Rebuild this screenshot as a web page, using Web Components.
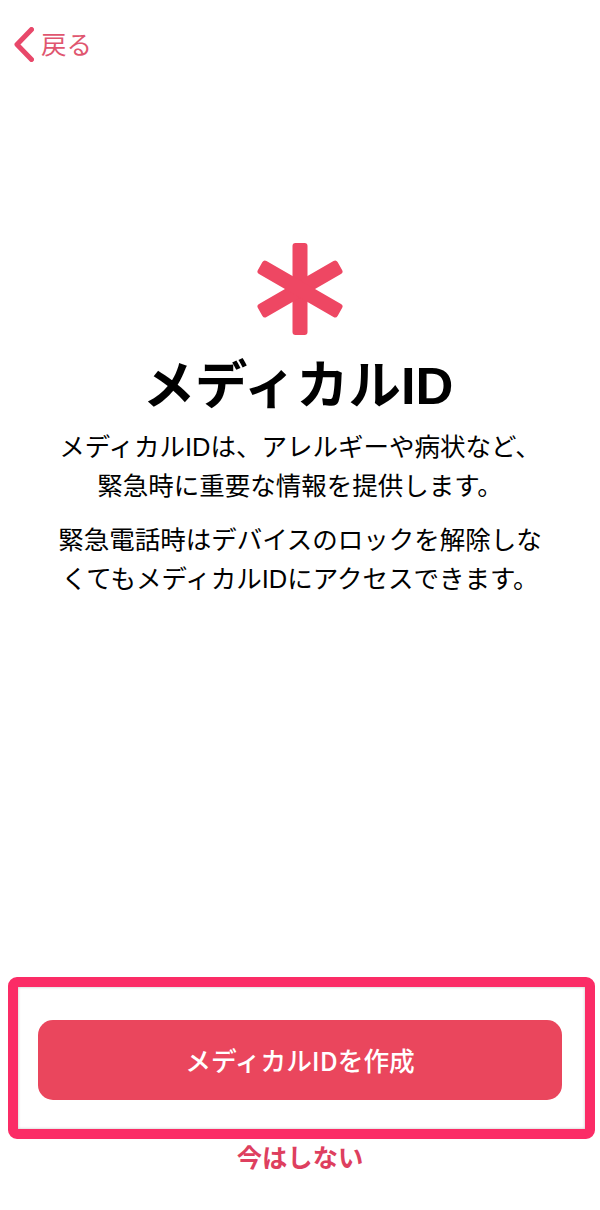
<!DOCTYPE html>
<html lang="ja">
<head>
<meta charset="utf-8">
<title>メディカルID</title>
<style>
html, body { margin: 0; padding: 0; background: #fff; }
body { font-family: "Liberation Sans", "Noto Sans CJK JP", sans-serif; }
</style>
</head>
<body>
<medical-screen>
    <back-link slot="nav">戻る</back-link>
    <medical-intro slot="intro" heading="メディカルID">
        <p>メディカルIDは、アレルギーや病状など、<br>緊急時に重要な情報を提供します。</p>
        <p>緊急電話時はデバイスのロックを解除しなくてもメディカルIDにアクセスできます。</p>
    </medical-intro>
    <action-frame slot="actions">メディカルIDを作成</action-frame>
    <skip-link slot="actions">今はしない</skip-link>
</medical-screen>

<script>
class MedicalScreen extends HTMLElement {
    constructor() {
        super();
        this.shadow = this.attachShadow({mode: 'open'});
    }
    connectedCallback() {
        this.shadow.innerHTML = `
        <style>
        :host { display: flex; flex-direction: column; width: 600px; height: 1210px; overflow: hidden; background: #fff; }
        .intro { flex: 1; }
        .actions { display: flex; flex-direction: column; padding-bottom: 36px; }
        </style>
        <slot name="nav"></slot>
        <div class="intro"><slot name="intro"></slot></div>
        <div class="actions"><slot name="actions"></slot></div>
        `;
    }
}

class BackLink extends HTMLElement {
    constructor() {
        super();
        this.shadow = this.attachShadow({mode: 'open'});
    }
    connectedCallback() {
        this.shadow.innerHTML = `
        <style>
        :host { display: flex; align-items: center; gap: 7px; padding: 27px 0 0 14px; height: 35px; color: #e0566f; font: 400 25.5px "Noto Sans CJK JP", sans-serif; }
        svg { display: block; width: 20px; height: 35px; }
        span { padding-bottom: 4px; }
        </style>
        <svg viewBox="0 0 20 35"><path d="M17.5 2.5 L3 17.5 L17.5 32.5" fill="none" stroke="#e8486a" stroke-width="5" stroke-linecap="round" stroke-linejoin="round"/></svg>
        <span><slot></slot></span>
        `;
    }
}

class MedicalIntro extends HTMLElement {
    constructor() {
        super();
        this.shadow = this.attachShadow({mode: 'open'});
    }
    connectedCallback() {
        this.shadow.innerHTML = `
        <style>
        :host { display: flex; flex-direction: column; align-items: center; padding-top: 181px; color: #000; font-family: "Noto Sans CJK JP", sans-serif; }
        svg { display: block; width: 86px; height: 92px; }
        h1 { margin: 13px 4px 0 0; font-size: 52.4px; font-weight: 700; line-height: 76px; font-family: "Liberation Sans", "Noto Sans CJK JP", sans-serif; }
        .text { width: 490px; margin-top: 4px; font-size: 25.5px; line-height: 38.5px; text-align: center; font-family: "Liberation Sans", "Noto Sans CJK JP", sans-serif; }
        ::slotted(p) { margin: 0 0 16px; }
        </style>
        <svg viewBox="0 0 86 92">
            <g fill="#ee4763">
                <rect x="35.5" y="0" width="15" height="92" rx="3"/>
                <rect x="35.5" y="0" width="15" height="92" rx="3" transform="rotate(60 43 46)"/>
                <rect x="35.5" y="0" width="15" height="92" rx="3" transform="rotate(120 43 46)"/>
            </g>
        </svg>
        <h1>${this.getAttribute('heading')}</h1>
        <div class="text"><slot></slot></div>
        `;
    }
}

class ActionFrame extends HTMLElement {
    constructor() {
        super();
        this.shadow = this.attachShadow({mode: 'open'});
    }
    connectedCallback() {
        this.shadow.innerHTML = `
        <style>
        :host { display: block; box-sizing: border-box; width: 587px; height: 162px; margin-left: 8px; padding: 33px 23px 0 20px; border: 10px solid #fb2c66; border-radius: 9px; box-shadow: inset 0 0 3px rgba(0,0,0,.25); }
        button { display: block; width: 524px; height: 80px; padding: 0 0 2px; border: 0; border-radius: 15px; background: #ea465d; color: #fff; font: 500 25.7px "Noto Sans CJK JP", sans-serif; }
        </style>
        <button><slot></slot></button>
        `;
    }
}

class SkipLink extends HTMLElement {
    constructor() {
        super();
        this.shadow = this.attachShadow({mode: 'open'});
    }
    connectedCallback() {
        this.shadow.innerHTML = `
        <style>
        :host { display: block; text-align: center; color: #de3f5f; font: 700 25.3px/35px "Noto Sans CJK JP", sans-serif; }
        </style>
        <slot></slot>
        `;
    }
}

customElements.define('medical-screen', MedicalScreen);
customElements.define('back-link', BackLink);
customElements.define('medical-intro', MedicalIntro);
customElements.define('action-frame', ActionFrame);
customElements.define('skip-link', SkipLink);
</script>
</body>
</html>
